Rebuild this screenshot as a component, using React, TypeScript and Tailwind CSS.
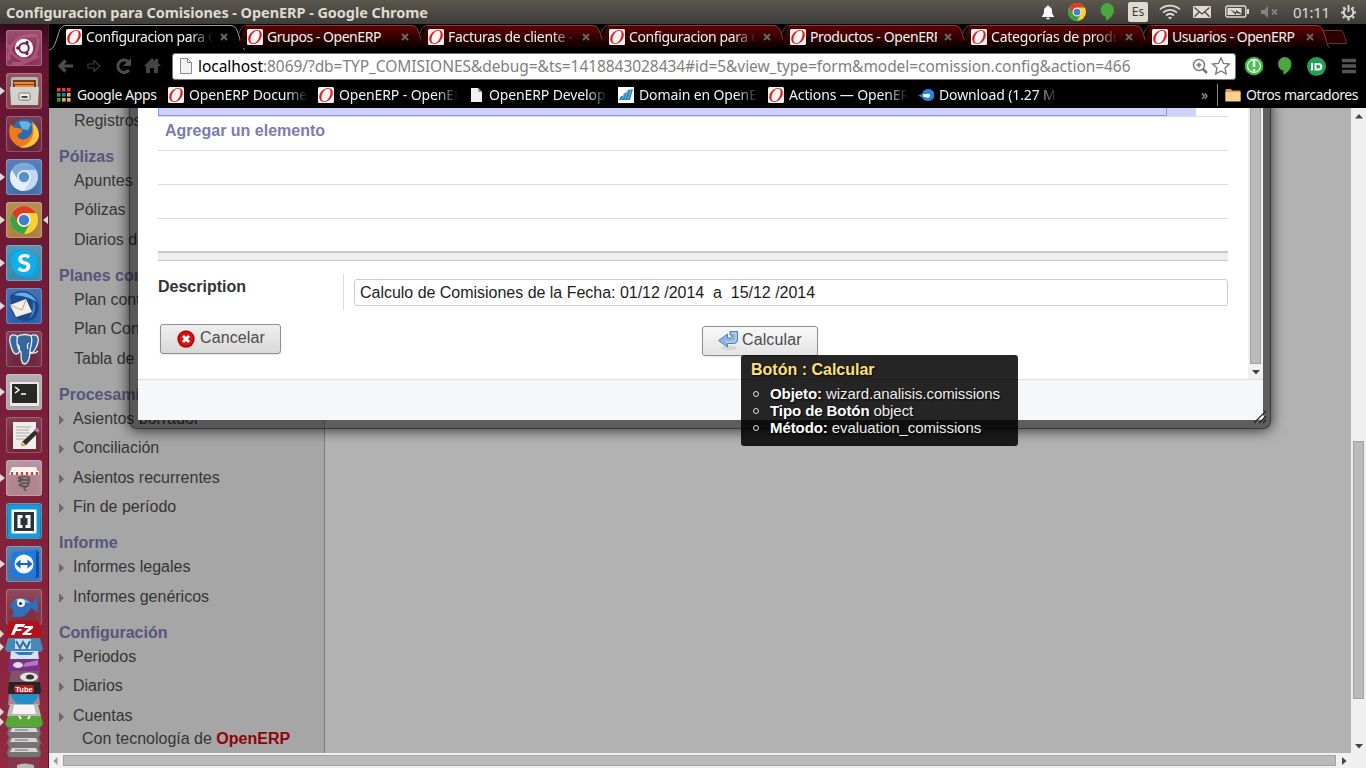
import React from "react";

const UI = "font-['Noto_Sans','Open_Sans',sans-serif]";

/* ---------- small shared drawings ---------- */

function Favicon() {
  return (
    <svg width="16" height="16" viewBox="0 0 16 16" className="shrink-0">
      <rect width="16" height="16" rx="1.5" fill="#f6f4f4" />
      <g transform="translate(8 8) skewX(-12)">
        <path
          fillRule="evenodd"
          fill="#d5201f"
          d="M.5-7C4.200-7 6.500-4.200 6.500-.5S3.700 7 0 7-6.500 4.200-6.500.5-3.200-7 .5-7ZM.8-6.200C-2.200-6.200-4.200-2.800-4.200.8S-2.700 6.200-.5 6.200C2.500 6.200 4.200 2.800 4.200-.8S2.700-6.200.8-6.200Z"
        />
      </g>
    </svg>
  );
}

function ChromeBall({ cx = 18, cy = 18, r = 14, pale = false }: { cx?: number; cy?: number; r?: number; pale?: boolean }) {
  const c = pale ? ["#7fa8da", "#c3d8f2", "#e6f0fb", "#5b8fd0"] : ["#dd3a2f", "#ffd034", "#35a346", "#3f7fd0"];
  return (
    <g transform={`translate(${cx} ${cy}) scale(${r / 14})`}>
      <circle r="14" fill={c[1]} />
      <path d="M-12.100-7A14 14 0 0 1 12.100-7L0-7A7 7 0 0 0-6 3.500Z" fill={c[0]} />
      <path d="M-12.100-7A14 14 0 0 0 0 14L6 3.500A7 7 0 0 1-6 3.500Z" fill={c[2]} />
      <circle r="6.600" fill="#f3f5f7" />
      <circle r="5.200" fill={c[3]} />
    </g>
  );
}

function Pin({ w = 14, h = 18 }: { w?: number; h?: number }) {
  return (
    <svg width={w} height={h} viewBox="0 0 14 18">
      <path d="M7 0a7 7 0 0 1 7 7c0 5-4 8.500-8 11v-4.200A7 7 0 0 1 7 0Z" fill="#4aa83d" />
    </svg>
  );
}

/* ---------- system panel ---------- */

function SystemBar() {
  return (
    <header className={`flex h-6 shrink-0 items-center bg-linear-to-b from-[#5a574e] to-[#3e3d39] ${UI}`}>
      <h1 className="w-[1034px] whitespace-nowrap pl-1.5 text-[14.5px] font-bold leading-6 tracking-[-0.070px] text-[#dfdbd2]">
        Configuracion para Comisiones - OpenERP - Google Chrome
      </h1>
      <div className="flex w-7 justify-center">
        <svg width="14" height="15" viewBox="0 0 14 15">
          <path d="M7 0.500c.8 0 1.200.5 1.200 1.200C10.500 2.300 11 4 11 6c0 3 .8 4 2 5.200v.8H1v-.8C2.200 10 3 9 3 6c0-2 .5-3.700 2.800-4.300C5.800 1 6.200.5 7 .5ZM5.200 12.800h3.600a1.800 1.800 0 0 1-3.600 0Z" fill="#fff" />
        </svg>
      </div>
      <div className="flex w-[30px] justify-center">
        <svg width="18" height="18" viewBox="0 0 36 36"><ChromeBall r={18} /></svg>
      </div>
      <div className="flex w-[30px] justify-center"><Pin /></div>
      <div className="flex w-8 justify-center">
        <span className="h-5 w-5 rounded-[2px] bg-[#dfdbd2] text-center text-[12px] leading-5 text-[#3c3b37]">Es</span>
      </div>
      <div className="flex w-8 justify-center">
        <svg width="22" height="16" viewBox="0 0 22 16" fill="none" stroke="#dfdbd2" strokeWidth="1.700">
          <path d="M1 5.500C6.500.2 15.500.2 21 5.500M4 8.700c4-3.800 10-3.800 14 0M7 11.500c2.500-2.200 5.500-2.200 8 0" />
          <path d="M9 13.500q2-1.500 4 0l-2 2Z" fill="#dfdbd2" stroke="none" />
        </svg>
      </div>
      <div className="flex w-8 justify-center">
        <svg width="18" height="12" viewBox="0 0 18 12">
          <rect width="18" height="12" rx="1" fill="#dfdbd2" />
          <path d="M1.500 1.500 9 8l7.500-6.500M1.500 10.800l4.800-5M16.500 10.800l-4.800-5" stroke="#4a4842" strokeWidth="1.300" fill="none" />
        </svg>
      </div>
      <div className="flex w-[38px] justify-center">
        <svg width="24" height="14" viewBox="0 0 24 14">
          <rect x="0.800" y="1" width="20" height="11" rx="1.500" fill="none" stroke="#dfdbd2" strokeWidth="1.400" />
          <rect x="2.500" y="3" width="14" height="7" fill="#dfdbd2" />
          <rect x="22" y="4" width="2" height="5" fill="#dfdbd2" />
          <path d="M5 4.200 11 7.500V5l7 5-7-2.300V10Z" fill="#3c3b37" />
        </svg>
      </div>
      <div className="flex w-7 justify-center">
        <svg width="18" height="12" viewBox="0 0 18 12">
          <path d="M0 4h3l4-4v12L3 8H0Z" fill="#85827b" />
          <path d="m11 3.500 5 5m0-5-5 5" stroke="#85827b" strokeWidth="1.800" />
        </svg>
      </div>
      <span className="w-[56px] pl-[9px] text-[15px] leading-6 tracking-[-0.300px] text-[#dfdbd2]">01:11</span>
      <svg width="17" height="17" viewBox="0 0 17 17" fill="none" stroke="#dfdbd2">
        <path d="M6 4.200a4.800 4.800 0 1 0 5 0M8.500 1v7" strokeWidth="1.900" />
        <path d="M3.300 3.300 4.500 4.500M12.500 4.500l1.200-1.200M1 8.500h2.200M13.800 8.500H16M3 14l1.500-1.500M14 14l-1.500-1.500M8.500 14v2.500" strokeWidth="2.200" />
      </svg>
    </header>
  );
}

/* ---------- launcher ---------- */

type App = { bg: string; running?: boolean; active?: boolean; art: React.ReactNode };

const apps: App[] = [
  {
    bg: "bg-[#8d3458]",
    art: (
      <>
        <path d="M3 30C2 12 14 3 32 6M6 33c16 3 27-6 26-24M2 14c4 16 18 20 30 12" stroke="#bd6d8b" strokeWidth="3" opacity=".55" fill="none" />
        <circle cx="18" cy="18" r="9.200" fill="#fff" />
        <circle cx="18" cy="18" r="4.800" fill="none" stroke="#74204a" strokeWidth="2" />
        <circle cx="11.800" cy="18" r="1.700" fill="#74204a" />
        <circle cx="21" cy="12.500" r="1.700" fill="#74204a" />
        <circle cx="21" cy="23.500" r="1.700" fill="#74204a" />
      </>
    ),
  },
  {
    bg: "bg-[#84404a]",
    running: true,
    art: (
      <>
        <rect x="5" y="4" width="27" height="28" rx="2" fill="#b9b5af" />
        <rect x="7" y="7" width="23" height="7" fill="#713e24" />
        <path d="M8 9h20v2H8zM9 12h19v2H9z" fill="#f08a38" />
        <path d="M4 14h29l-1 18H5Z" fill="#d3d1cd" />
        <rect x="13" y="20" width="11" height="7" rx="1.500" fill="#efeeec" stroke="#77736d" />
        <rect x="15.500" y="23" width="6" height="2" fill="#4d4a46" />
      </>
    ),
  },
  {
    bg: "bg-[#69243d]",
    art: (
      <>
        <circle cx="19" cy="17" r="14" fill="#2d6bac" />
        <path d="M13 6q8-3 12 2l-3 6-6-1Z" fill="#63b4dc" />
        <path d="M5 7c0 3 2 4 5 5 5 0 7 1 6 4-4 2-5 3-4 5 3 4 9 3 12-1 3-3 3-7 1-12 8 5 9 14 3 19-6 6-16 6-21-1C3 22 2 15 5 7Z" fill="#ef7a1e" />
        <path d="M26 6c7 6 9 14 5 19-4 6-12 8-18 6 9-1 18-9 13-25Z" fill="#ffc63c" />
      </>
    ),
  },
  { bg: "bg-[#4370ad]", running: true, art: <ChromeBall pale /> },
  { bg: "bg-[#ac8042]", running: true, active: true, art: <ChromeBall /> },
  {
    bg: "bg-[#3c89ac]",
    running: true,
    art: (
      <>
        <circle cx="13" cy="13" r="9" fill="#0aa6e4" />
        <circle cx="23" cy="23" r="9.500" fill="#0aa6e4" />
        <circle cx="18" cy="18" r="13" fill="#12aeea" />
        <text x="18" y="27" textAnchor="middle" fontSize="25" fontWeight="900" fontFamily="Lato, sans-serif" fill="#fff">S</text>
      </>
    ),
  },
  {
    bg: "bg-[#2f5ea9]",
    running: true,
    art: (
      <>
        <path d="M4 8c6-6 17-7 24 0 7 7 6 19-2 24-8 3-16 0-20-8Z" fill="#1b4b8e" />
        <path d="M8 7c8-5 18-2 23 7-8-5-15-6-23-7Z" fill="#6caee4" />
        <path d="m4 17 16-6 6 13-16 5Z" fill="#f3efe6" />
        <path d="m4 17 12 5 4-10" fill="none" stroke="#b5a995" />
        <path d="M27 12c4 7 2 15-4 19 4-7 4-12 4-19Z" fill="#3d82cd" />
      </>
    ),
  },
  {
    bg: "bg-[#6d2940]",
    art: (
      <g fill="#34689a" stroke="#e9eef4" strokeWidth="1.300" strokeLinejoin="round">
        <path d="M11 5C5 2 3 6 4 11s3 12 6 12 4-3 4-6Z" />
        <path d="M24 5c7-3 9 1 8 6s-4 10-6 11-4-2-4-6Z" />
        <path d="M12 5c4-2 10-2 13 0 2 4 0 10-1 14 0 6-1 13-5 14-4 0-4-6-4-12-4-3-5-12-3-16Z" />
        <path d="M11 13c2 1 3 3 2 6M23 12c-2 1-2 4-1 6M24 21c3 2 6 1 8-1" fill="none" />
      </g>
    ),
  },
  {
    bg: "bg-[#aaa2a6]",
    running: true,
    art: (
      <>
        <rect x="4" y="8" width="29" height="24" rx="1" fill="#e9e9e7" />
        <rect x="6" y="10" width="25" height="19" fill="#282826" />
        <path d="m9 13 4 3-4 3M15 20h5" stroke="#fff" strokeWidth="1.500" fill="none" />
      </>
    ),
  },
  {
    bg: "bg-[#732239]",
    art: (
      <>
        <rect x="7" y="5" width="23" height="27" fill="#f0eeea" />
        <path d="M10 10h15M10 13h13M10 16h14M10 19h12M10 22h9" stroke="#aaa59d" />
        <path d="m16 25 13-12 3 3-12 12-5 1Z" fill="#2f2f2d" />
        <path d="m28 13 2-2q4 0 3 4l-1 1Z" fill="#c76eb0" />
        <path d="m15 29 1.500-4.500 3 3Z" fill="#e8cf56" />
      </>
    ),
  },
  {
    bg: "bg-[#b08491]",
    running: true,
    art: (
      <>
        <path d="M6 4q3-3 6 0M26 4q3-3 6 0" stroke="#8ab1e0" strokeWidth="1.500" fill="none" />
        <path d="M6 7h24l3 8H3Z" fill="#f5f2ef" />
        <path d="M4 11h29v4H4z" fill="#fff" />
        <path d="M6 12v3M11 12v3M16 12v3M21 12v3M26 12v3M31 12v3" stroke="#cf4436" strokeWidth="2.500" />
        <path d="M12 18q7-3 12 0M12 18q6 3 12 1M12 21q7-2 12 0M12 21q6 4 12 1M13 25q6-3 10-1M13 25q6 3 10 0l-5 3 2 3" stroke="#555" strokeWidth="1.500" fill="none" />
      </>
    ),
  },
  {
    bg: "bg-[#196d9c]",
    art: (
      <>
        <rect x="2" y="2" width="32" height="33" rx="3" fill="#159bd8" />
        <rect x="5.500" y="6.500" width="25" height="24" rx="1" fill="#fff" />
        <rect x="8" y="9" width="20" height="19" fill="#2d3237" />
        <path d="M16.500 12h-5v13h5v-3h-2v-7h2ZM19.500 12h5v13h-5v-3h2v-7h-2Z" fill="#fff" />
      </>
    ),
  },
  {
    bg: "bg-[#446fa7]",
    running: true,
    art: (
      <>
        <path d="M6 6 30 4v28L6 30Z" fill="#1c7be0" />
        <path d="m30 4 3 2v25l-3 1Z" fill="#0c4ca8" />
        <circle cx="18" cy="18" r="9.500" fill="#f5f9fe" />
        <path d="m9.500 18 5-4.500V17h7v-3.500l5 4.500-5 4.500V19h-7v3.500Z" fill="#1b62c4" />
      </>
    ),
  },
  {
    bg: "bg-[#803044]",
    art: (
      <>
        <path d="M4 17C8 7 19 7 26 14l6-7c-1 7-1 11 1 17l-8-5c-4 9-13 11-20 8 4-1 3-6-1-10Z" fill="#3170b9" />
        <path d="M9 11c5-3 11-1 15 3-5-1-10-1-15-3Z" fill="#80b3e6" />
        <circle cx="15" cy="14" r="4" fill="#f5f5ef" />
        <circle cx="14.500" cy="14.500" r="1.500" fill="#222" />
      </>
    ),
  },
];

function LauncherItem({ bg, running, active, art }: App) {
  return (
    <li className="flex h-[43px] items-start">
      <svg width="6" height="36" viewBox="0 0 6 36">{running && <path d="M0 14 5 18 0 22Z" fill="#ddd9d9" />}</svg>
      <div className={`h-9 w-9 overflow-hidden rounded-[3px] shadow-[inset_0_0_0_1px_rgba(255,255,255,0.22),inset_0_12px_12px_rgba(255,255,255,0.12)] ${bg}`}>
        <svg width="36" height="36" viewBox="0 0 36 36">{art}</svg>
      </div>
      <svg width="6" height="36" viewBox="0 0 6 36">{active && <path d="M6 14 1 18 6 22Z" fill="#ddd9d9" />}</svg>
    </li>
  );
}

function Launcher() {
  return (
    <nav className="flex h-full w-[49px] shrink-0 flex-col overflow-hidden border-r border-[#511426] bg-linear-to-b from-[#35091a] via-[#631533] via-[4%] to-[#91293f] pt-1.5">
      <ul className="h-[591px] shrink-0">
        {apps.map((a, i) => <LauncherItem key={i} {...a} />)}
      </ul>
      <svg width="48" height="147" viewBox="0 0 48 147" className="shrink-0">
        <path d="M9 125h30l3 6-3 16H9l-3-16Z" fill="#80384a" />
        <path d="M0 9l4 4-4 4ZM0 22l4 4-4 4ZM0 87l4 4-4 4ZM0 97l4 4-4 4Z" fill="#ddd9d9" />
        <g>
          <path d="M9 0h30l3 15-3 3H9l-4-3Z" fill="#b31218" />
          <path d="m15 4 1-1h9l-1 3h-6l-1 2h5l-1 2h-5l-2 4h-3ZM25 5h8v2l-6 5h5l-1 2h-9l1-2 6-5h-5Z" fill="#fff" />
          <path d="M8 17h32l3 11-2 3H7l-2-3Z" fill="#4788b8" />
          <path d="M15 18h16v10H15z" fill="#c5dced" />
          <path d="m16 20 4 7 3-6 4 6 3-7" fill="none" stroke="#2b6c9e" strokeWidth="2" />
          <path d="M11 30h27l1 9H10Z" fill="#d4e3f2" />
          <path d="M14 31h20l-3 3H19Z" fill="#3478b8" />
          <path d="M9 38h30l1 13H8Z" fill="#793087" />
          <ellipse cx="18" cy="44" rx="5" ry="3" fill="#ddd" />
          <path d="m25 42 13-3v5l-15 2Z" fill="#b277be" />
          <path d="M11 50h28v12H9Z" fill="#81536d" />
          <ellipse cx="29" cy="56" rx="9" ry="4.500" fill="#e1e1df" />
          <ellipse cx="30" cy="56" rx="4" ry="2.500" fill="#333" />
          <path d="M9 61h31l1 10-2 2H9l-1-2Z" fill="#262325" />
          <rect x="14" y="64" width="20" height="8" rx="2" fill="#b51f24" />
          <text x="24" y="70.500" textAnchor="middle" fontSize="7.500" fontWeight="bold" fontFamily="Liberation Sans, sans-serif" fill="#fff">Tube</text>
          <path d="M9 73h30l1 11H8Z" fill="#9b8c99" />
          <path d="M10 73h29q-4 12-14 12T10 73Z" fill="#258dc4" />
          <path d="M10 83h28l3 12H7Z" fill="#b8b8b8" />
          <path d="M14 84h20l2 9H12Z" fill="#f3f3f2" />
          <path d="M8 95h33l2 8-2 3H7l-2-3Z" fill="#57a638" />
          <path d="m19 95 2 3M30 95l-2 3" stroke="#fff" strokeWidth="2" />
          <path d="M9 106h30l2 6-2 4H9l-2-4ZM9 116h30l2 6-2 4H9l-2-4ZM9 126h30l2 6-2 4H9l-2-4Z" fill="#777476" />
          <path d="m12 107 24 0 2 4H10ZM12 117h24l2 4H10ZM12 127h24l2 4H10Z" fill="#d8d7d5" />
          <path d="M15 109h13M15 119h13M15 129h13" stroke="#a3a2a0" strokeWidth="2" />
          <path d="M17 144q7-3 17 0v3H17Z" fill="#bdb7b9" />
        </g>
      </svg>
    </nav>
  );
}

/* ---------- browser chrome ---------- */

const tabs = [
  { title: "Configuracion para Comisiones", track: "tracking-[-0.400px]" },
  { title: "Grupos - OpenERP", track: "tracking-[-0.460px]" },
  { title: "Facturas de cliente - OpenERP", track: "tracking-[-0.300px]" },
  { title: "Configuracion para Comisiones", track: "tracking-[-0.400px]" },
  { title: "Productos - OpenERP", track: "tracking-[-0.400px]" },
  { title: "Categorías de productos", track: "tracking-[-0.220px]" },
  { title: "Usuarios - OpenERP", track: "tracking-[-0.460px]" },
];

const fade = "[mask-image:linear-gradient(to_right,#000_82%,transparent)]";

function TabStrip() {
  return (
    <div className="flex h-7 shrink-0 bg-black">
      {tabs.map((t, i) => (
        <div key={i} className="relative flex h-7 w-[181px] shrink-0 items-center pl-[17px] pb-0.5">
          <svg className="absolute left-0 top-0" width="198" height="28" viewBox="0 0 198 28">
            <defs>
              <linearGradient id={`tab${i}`} x1="0" x2="0" y1="0" y2="1">
                <stop offset="0" stopColor="#620000" />
                <stop offset="1" stopColor="#080000" />
              </linearGradient>
            </defs>
            {i === 0 ? (
              <path d="M0 26C5 25 6 20 9 11 11 5 12 1.500 17 1.500H181C187 1.500 188 6 190 12 192 19 192 24 196 25.500" fill="#000" stroke="#a0a0a0" />
            ) : (
              <path d="M6 24 9 20 13 8Q15 1.500 18 1.500H181C187 1.500 188 6 190 12L195 24Z" fill={`url(#tab${i})`} />
            )}
            {i > 0 && <path d="M9 9C11 4 13 1.500 17 1.500H181C187 1.500 188 6 190 12 192 19 192 22 195 24" fill="none" stroke="#7d4444" />}
          </svg>
          <div className="relative flex items-center"><Favicon /></div>
          <span className={`relative ml-1 w-[127px] overflow-hidden whitespace-nowrap text-[14px] leading-6 text-[#f2f2f2] ${t.track} ${t.title.length > 19 ? fade : ""}`}>{t.title}</span>
          <svg width="8" height="8" viewBox="0 0 8 8" className="relative ml-[7px]">
            <path d="m1 1 6 6m0-6L1 7" stroke="#666" strokeWidth="2" />
          </svg>
        </div>
      ))}
      <svg width="34" height="28" viewBox="0 0 34 28" className="ml-[3px]">
        <path d="M7 6.500h19q3 0 4 4l2.500 9H13q-3 0-4-4L6 8Q6 6.500 7 6.500Z" transform="translate(-5 0)" fill="#2d0000" stroke="#6a3030" />
      </svg>
    </div>
  );
}

function Toolbar() {
  return (
    <div className="flex h-[30px] shrink-0 items-center bg-black pl-[8px] pb-0.5">
      <svg width="105" height="20" viewBox="0 0 105 20" fill="none" stroke="#4c4c4c">
        <path d="m8.500 4.500-5.500 5.500 5.500 5.500M3 10h13" strokeWidth="3.200" />
        <path d="M31 8h6V4.500l6 5.500-6 5.500V12h-6Z" stroke="#3c3c3c" strokeWidth="1.200" />
        <path d="M72 14a6.200 6.200 0 1 1-1-8.500" strokeWidth="3" />
        <path d="M74 2v8h-8Z" fill="#4c4c4c" stroke="none" />
        <path d="m87 10 8-8 3 3V3h3v4l3 3h-3v7h-4v-5h-4v5h-4v-7Z" fill="#444" stroke="none" />
      </svg>
      <div className="ml-2.5 flex h-[27px] w-[1064px] items-center rounded-[3px] border border-[#777] bg-white pl-[7px] pr-1">
        <svg width="12" height="16" viewBox="0 0 12 16">
          <path d="M.5.5h7l4 4v11H.5Z" fill="#f2f2f2" stroke="#8b8b8b" />
          <path d="M7.500.5v4h4" fill="none" stroke="#8b8b8b" />
        </svg>
        <span className="ml-1.5 flex-1 whitespace-nowrap text-[15.500px] leading-6 tracking-[-0.060px] text-[#808080]">
          <span className="text-black">localhost</span>:8069/?db=TYP_COMISIONES&amp;debug=&amp;ts=1418843028434#id=5&amp;view_type=form&amp;model=comission.config&amp;action=466
        </span>
        <svg width="40" height="20" viewBox="0 0 40 20" fill="none" stroke="#777">
          <circle cx="8" cy="9" r="5.500" strokeWidth="1.400" />
          <path d="m12 13 4 4" strokeWidth="2.500" />
          <path d="M5.500 9h5M8 6.500v5" strokeWidth="1.400" />
          <path d="m30 1.800 2.500 5.600 6 .6-4.500 4 1.300 6-5.300-3.100-5.300 3.100L26 12l-4.500-4 6-.6Z" strokeWidth="1.300" />
        </svg>
      </div>
      <div className="ml-2 flex items-center gap-[13px]">
        <svg width="20" height="20" viewBox="0 0 20 20">
          <circle cx="10" cy="10" r="9.300" fill="#36b93b" />
          <circle cx="10" cy="10" r="6.500" fill="#46c64a" stroke="#e5f8e5" strokeWidth="1.300" />
          <path d="M10 4v7M10 13v2.500" stroke="#fff" strokeWidth="2.500" />
        </svg>
        <Pin w={15} h={18} />
        <svg width="19" height="19" viewBox="0 0 19 19" className="ml-[2px]">
          <circle cx="9.500" cy="9.500" r="9.500" fill="#239f52" />
          <path d="M5 6v7.500" stroke="#fff" strokeWidth="2" />
          <path d="M8.500 7h3a2.800 2.800 0 0 1 0 5.600h-3Z" fill="none" stroke="#fff" strokeWidth="2" />
        </svg>
        <svg width="14" height="16" viewBox="0 0 14 16" className="ml-[3px]">
          <path d="M0 2.500h14M0 8h14M0 13.500h14" stroke="#555" strokeWidth="3.400" />
        </svg>
      </div>
    </div>
  );
}

function AppsGrid() {
  const colors = ["#e23b31", "#e23b31", "#e23b31", "#2f9e4b", "#2f72d9", "#eeb12c", "#2f9e4b", "#eeb12c", "#eeb12c"];
  return (
    <svg width="14" height="14" viewBox="0 0 14 14" className="mr-[6px]">
      {colors.map((c, i) => <rect key={i} x={(i % 3) * 5} y={Math.floor(i / 3) * 5} width="3.600" height="3.600" fill={c} />)}
    </svg>
  );
}

const bookmarks = [
  { label: "OpenERP Documentation", icon: <Favicon /> },
  { label: "OpenERP - OpenERP", icon: <Favicon /> },
  {
    label: "OpenERP Developers",
    icon: (
      <svg width="16" height="16" viewBox="0 0 16 16"><path d="M3 1h7l4 4v10H3Z" fill="#f1f1f1" /><path d="M10 1v4h4Z" fill="#999" /></svg>
    ),
  },
  {
    label: "Domain en OpenERP",
    icon: (
      <svg width="16" height="16" viewBox="0 0 16 16"><rect width="16" height="16" fill="#fff" /><path d="m1 13 2-4h2l1-3h2l2-3 5-1-3 11Z" fill="#2385be" /><path d="M4 12 7 6M7 12l3-8M10 12l3-9" stroke="#a5d2ea" strokeWidth=".7" /></svg>
    ),
  },
  { label: "Actions — OpenERP", icon: <Favicon /> },
  {
    label: "Download (1.27 MB)",
    icon: (
      <svg width="16" height="16" viewBox="0 0 16 16"><path d="M0 8.500 4 7Q5.500 2 10.500 2a5.500 5.500 0 0 1 0 12Q6 14 4 10.500Z" fill="#2584e6" /><path d="M5 7.500q6-1.500 7 0t-1 3q-2 .5-6-1Z" fill="#fff" /></svg>
    ),
  },
];

function BookmarkBar() {
  return (
    <div className="flex h-[26px] shrink-0 items-center bg-black pl-2 pb-px text-[14px] leading-6 tracking-[-0.120px] text-[#f2f2f2]">
      <div className="flex w-[111px] items-center whitespace-nowrap tracking-[-0.380px]"><AppsGrid />Google Apps</div>
      {bookmarks.map((b) => (
        <div key={b.label} className="flex w-[150px] shrink-0 items-center gap-[5px]">
          {b.icon}
          <span className={`w-[119px] overflow-hidden whitespace-nowrap leading-6 ${fade}`}>{b.label}</span>
        </div>
      ))}
      <span className="ml-[133px] w-[16px] text-[14px] text-[#aaa]">»</span>
      <div className="h-[22px] w-px bg-[#888]" />
      <svg width="16" height="14" viewBox="0 0 16 14" className="ml-[7px]">
        <path d="M1 1h5l1 1.500h8.500V13H.5V2Z" fill="#d99b4d" />
        <path d="M.5 4h15v9.500H.5Z" fill="#f8d191" />
      </svg>
      <span className="ml-[5px] whitespace-nowrap tracking-[-0.400px]">Otros marcadores</span>
    </div>
  );
}

/* ---------- page ---------- */

const groups = [
  { title: "Pólizas", arrows: false, items: ["Apuntes contables", "Pólizas", "Diarios de pólizas"] },
  { title: "Planes contables", arrows: false, items: ["Plan contable", "Plan Contable", "Tabla de impuestos"] },
  { title: "Procesamiento periódico", arrows: true, items: ["Asientos borrador", "Conciliación", "Asientos recurrentes", "Fin de período"] },
  { title: "Informe", arrows: true, items: ["Informes legales", "Informes genéricos"] },
  { title: "Configuración", arrows: true, items: ["Periodos", "Diarios", "Cuentas"] },
];

function Sidebar() {
  return (
    <aside className="h-full w-[276px] shrink-0 overflow-hidden border-r border-[#7b7b7b] bg-[#a6a6a6] text-[16px] leading-[18px] text-[#353535]">
      <div className="-mt-[2px] flex h-[29.500px] items-center pl-[25px]">Registros</div>
      {groups.map((g) => (
        <section key={g.title}>
          <h2 className="h-[30.500px] whitespace-nowrap pl-[10px] pt-[12px] font-bold text-[#56557b]">{g.title}</h2>
          {g.items.map((it) => (
            <div key={it} className={`flex h-[29.500px] items-center whitespace-nowrap ${g.arrows ? "pl-[10px]" : "pl-[25px]"}`}>
              {g.arrows && (
                <svg width="14" height="12" viewBox="0 0 14 12"><path d="m0 2 5 5-5 5Z" fill="#6a6a6a" /></svg>
              )}
              {it}
            </div>
          ))}
        </section>
      ))}
      <p className="-mt-px pl-[33px]">Con tecnología de <b className="text-[#8f0409]">OpenERP</b></p>
    </aside>
  );
}

function DialogButton({ children, className }: { children: React.ReactNode; className: string }) {
  return (
    <button className={`flex h-[30px] items-center rounded-[3px] border border-[#8f8f8f] bg-linear-to-b pb-[3px] pl-4 text-[16px] leading-[18px] tracking-[0.120px] text-[#4c4c4c] shadow-[0_1px_2px_rgba(0,0,0,0.1)] ${className}`}>
      {children}
    </button>
  );
}

function Tooltip() {
  const rows = [
    ["Objeto:", "wizard.analisis.comissions"],
    ["Tipo de Botón", "object"],
    ["Método:", "evaluation_comissions"],
  ];
  return (
    <div className="absolute left-[692px] top-[247px] h-[91px] w-[277px] rounded-[3px] bg-black/85 pl-[10px] pt-[5px] [text-shadow:1px_1px_2px_rgba(0,0,0,0.9)]">
      <h3 className="text-[16px] font-bold leading-5 text-[#ffe177]">Botón : Calcular</h3>
      <ul className="mt-[5px] text-[15px] leading-[17px] tracking-[-0.080px] text-[#eee]">
        {rows.map(([k, v]) => (
          <li key={k} className="flex items-center whitespace-nowrap">
            <span className="ml-[2px] mr-[11px] h-[6px] w-[6px] rounded-full border border-[#ddd]" />
            <span><b className="text-white">{k}</b> {v}</span>
          </li>
        ))}
      </ul>
    </div>
  );
}

function Dialog() {
  return (
    <div className="absolute -top-3 left-[80px] h-[333px] w-[1142px] rounded-b-[8px] border border-black/40 bg-black/47 px-2 pb-2 pt-[11px] pr-[7px] shadow-[0_1px_14px_rgba(0,0,0,0.75)]">
      <div className="flex h-[312px] w-[1125px] flex-col bg-white">
        <div className="flex h-[271px]">
          <div className="w-[1110px] px-5">
            <div className="flex h-2">
              <div className="w-[1009px] border-x border-b border-[#7a9cff] bg-[#d1d1ff]" />
              <div className="w-[29px] bg-[#d1d1ff]" />
            </div>
            <div className="flex h-[35px] items-center border-y border-[#dcdcdc] pb-[5px] pl-[7px] text-[16px] font-bold text-[#7c7bad]">Agregar un elemento</div>
            <div className="h-[34px] border-b border-[#dcdcdc]" />
            <div className="h-[34px] border-b border-[#dcdcdc]" />
            <div className="h-8" />
            <div className="h-[10px] border-b border-t-2 border-[#c8c8c8] bg-[#eee]" />
            <div className="mt-[13px] flex h-9">
              <label className="w-[186px] border-r border-[#ddd] pt-[4px] text-[16px] font-bold leading-[18px] text-[#333]">Description</label>
              <div className="ml-[10px] mt-[5px] flex h-[27px] w-[874px] items-center whitespace-pre rounded-[3px] border border-[#ccc] pl-[5px] text-[16px] tracking-[-0.020px] text-[#1d1d1d]">Calculo de Comisiones de la Fecha: 01/12 /2014  a  15/12 /2014</div>
            </div>
            <div className="mt-[14px] flex items-start pl-[2px]">
              <DialogButton className="w-[121px] from-[#efefef] to-[#d8d8d8]">
                <svg width="18" height="18" viewBox="0 0 18 18" className="mr-[5px] mt-[3px]">
                  <circle cx="9" cy="9" r="8.700" fill="#cf1717" />
                  <circle cx="9" cy="9" r="7.600" fill="none" stroke="#a40000" />
                  <path d="m6 6 6 6m0-6-6 6" stroke="#fff" strokeWidth="2.800" />
                </svg>
                Cancelar
              </DialogButton>
              <DialogButton className="ml-[421px] mt-[2px] w-[116px] from-[#f8f8f8] to-[#e4e4e4]">
                <svg width="20" height="20" viewBox="0 0 20 20" className="mr-[4px] mt-[1px] -ml-[1px]">
                  <ellipse cx="11" cy="18" rx="8" ry="2" fill="#ccc" opacity=".7" />
                  <path d="M12 1.500h7.500V9q0 4.500-4 4.500H9.500V17L.6 10.500 9.500 4v4h3q1.500 0 1.500-3h-2Z" fill="#8db6de" stroke="#4b7fb8" />
                  <path d="M14 3h4v6q0 3-3.500 3H8" fill="none" stroke="#cbe0f3" />
                </svg>
                Calcular
              </DialogButton>
            </div>
          </div>
          <div className="flex w-[15px] flex-col items-center bg-[#f0f0f0]">
            <div className="h-64 w-[11px] border border-t-0 border-[#a2a2a2] bg-[#bababa]" />
            <svg width="8" height="5" viewBox="0 0 8 5" className="mt-[6px]"><path d="M0 0h8L4 4.500Z" fill="#444" /></svg>
          </div>
        </div>
        <div className="flex-1 border-t border-[#ddd] bg-[#f5f7f9]" />
      </div>
      <svg width="14" height="14" viewBox="0 0 14 14" className="absolute bottom-[4px] right-[3px]">
        <path d="M1 13 13 1M6 13l7-7M10 13l3-3" stroke="#222" strokeWidth="1.300" />
        <path d="m3.500 13 9.500-9.500" stroke="#777" strokeWidth="1" />
        <path d="m7 9.500 3.500-3.500" stroke="#fff" strokeWidth="2" />
      </svg>
    </div>
  );
}

function Page() {
  return (
    <div className="grid min-h-0 flex-1 grid-cols-[1302px_15px] grid-rows-[645px_15px] bg-[#f0f0f0] font-['Liberation_Sans',Arial,sans-serif]">
      <main className="relative flex overflow-hidden bg-[#b2b2b2]">
        <Sidebar />
        <Dialog />
        <Tooltip />
      </main>
      <div className="flex flex-col items-center">
        <svg width="8" height="5" viewBox="0 0 8 5" className="mt-[6px]"><path d="M0 4.500h8L4 0Z" fill="#444" /></svg>
        <div className="mt-[322px] h-[258px] w-[11px] border border-[#a2a2a2] bg-[#bababa]" />
        <svg width="8" height="5" viewBox="0 0 8 5" className="mt-[45px]"><path d="M0 0h8L4 4.500Z" fill="#444" /></svg>
      </div>
      <div className="flex items-center">
        <svg width="5" height="8" viewBox="0 0 5 8" className="ml-[4px]"><path d="M4.500 0v8L.5 4Z" fill="#999" /></svg>
        <div className="ml-[5px] h-[11px] w-[1273px] border border-[#a2a2a2] bg-[#bababa]" />
        <svg width="5" height="8" viewBox="0 0 5 8" className="ml-[6px]"><path d="M0 0v8l4.500-4Z" fill="#444" /></svg>
      </div>
    </div>
  );
}

export default function App() {
  return (
    <div className="flex h-[768px] w-[1366px] flex-col overflow-hidden bg-black">
      <SystemBar />
      <div className="flex min-h-0 flex-1">
        <Launcher />
        <div className={`flex min-w-0 flex-1 flex-col ${UI}`}>
          <TabStrip />
          <Toolbar />
          <BookmarkBar />
          <Page />
        </div>
      </div>
    </div>
  );
}
